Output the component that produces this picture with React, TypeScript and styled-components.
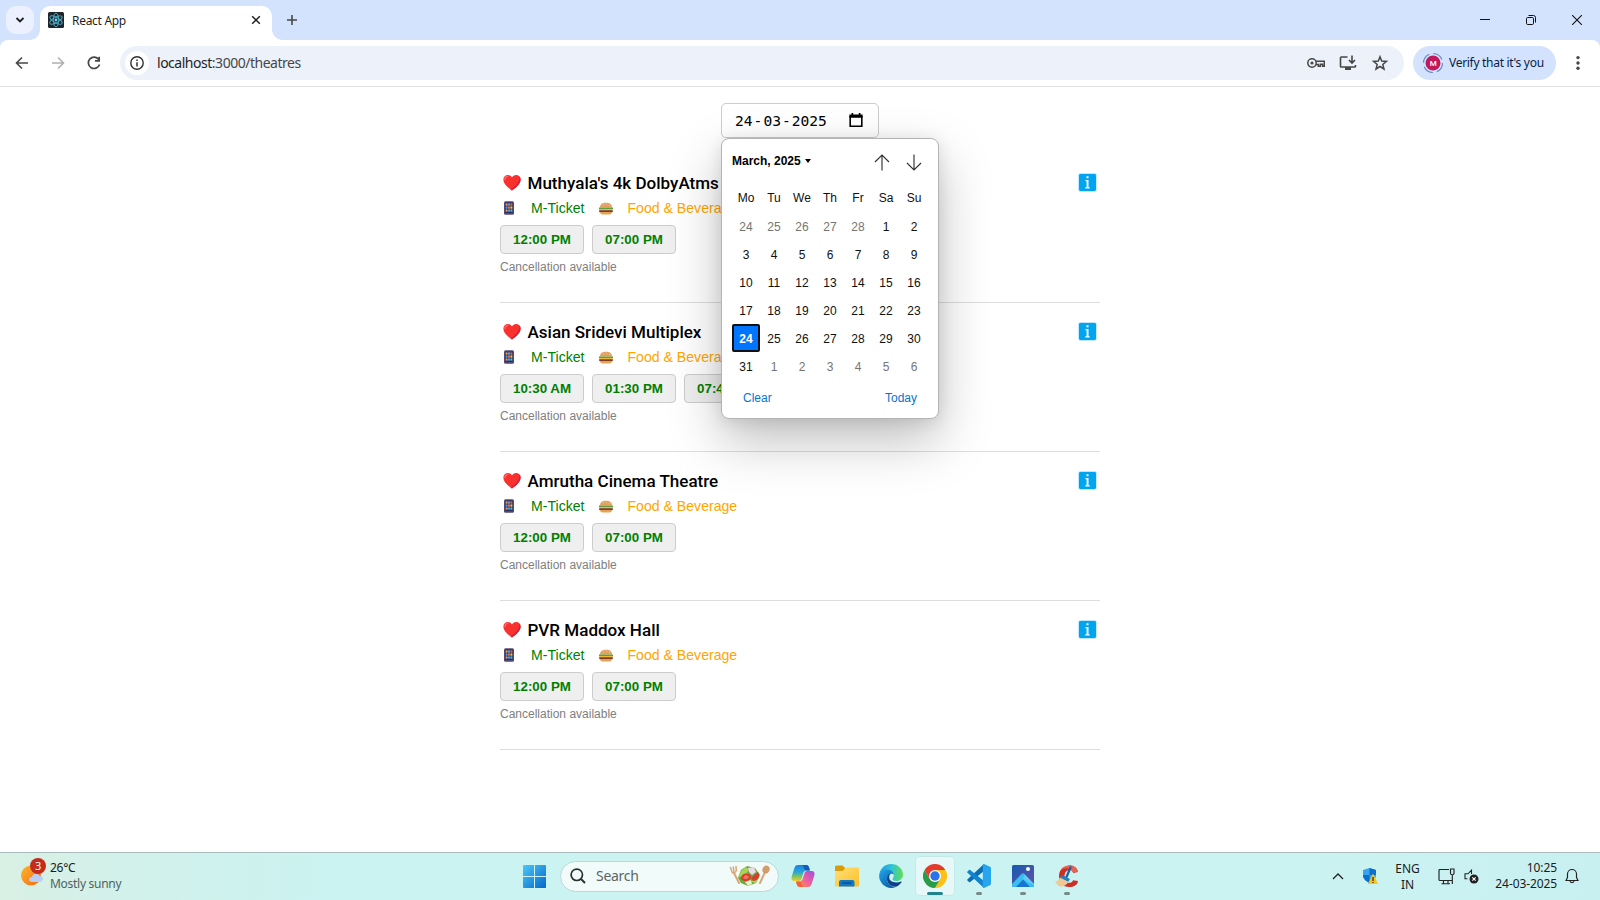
import React from "react";
import styled, { createGlobalStyle } from "styled-components";

const Global = createGlobalStyle`
  * { box-sizing: border-box; }
  body { margin: 0; background: #fff; overflow: hidden; font-family: "Liberation Sans", Arial, sans-serif; }
  svg { display: block; flex: none; }
  button { font: inherit; padding: 0; border: 0; background: none; color: inherit; }
`;

const ui = `"Noto Sans", "Open Sans", sans-serif`;

const Screen = styled.div`
  width: 1600px;
  height: 900px;
  display: flex;
  flex-direction: column;
  overflow: hidden;
`;

/* ---------- browser frame ---------- */
const TitleBar = styled.header`
  height: 40px;
  flex: none;
  background: #d3e3fd;
  display: flex;
  align-items: flex-end;
`;
const TabSearch = styled.button`
  width: 28px;
  height: 28px;
  margin: 0 6px 6px;
  border-radius: 10px;
  background: #ebf1fe;
  display: grid;
  place-items: center;
`;
const Tab = styled.div`
  width: 232px;
  height: 34px;
  padding: 0 11px 6px 8px;
  border-radius: 10px 10px 0 0;
  background: #fff;
  display: flex;
  align-items: center;
  position: relative;
  font: 12px ${ui};
  letter-spacing: -0.3px;
  color: #1f1f1f;
  &::before, &::after {
    content: "";
    position: absolute;
    bottom: 0;
    width: 10px;
    height: 10px;
  }
  &::before { left: -10px; background: radial-gradient(circle at 0 0, transparent 9.5px, #fff 10px); }
  &::after { right: -10px; background: radial-gradient(circle at 100% 0, transparent 9.5px, #fff 10px); }
`;
const TabTitle = styled.span`
  flex: 1;
  margin-left: 8px;
`;
const NewTab = styled.button`
  margin: 0 0 14px 14px;
`;
const WindowButtons = styled.div`
  margin-left: auto;
  height: 40px;
  display: flex;
  button {
    width: 46px;
    display: grid;
    place-items: center;
  }
`;
const ToolbarBack = styled.div`
  background: #d3e3fd;
  flex: none;
`;
const Toolbar = styled.div`
  height: 47px;
  padding: 0 0 1px 13px;
  background: #fff;
  border-radius: 8px 8px 0 0;
  border-bottom: 1px solid #dfe1e3;
  display: flex;
  align-items: center;
`;
const NavButtons = styled.nav`
  width: 107px;
  display: flex;
  gap: 18px;
`;
const AddressBar = styled.div`
  width: 1284px;
  height: 34px;
  padding: 0 15px 0 5px;
  border-radius: 17px;
  background: #ecf1fa;
  display: flex;
  align-items: center;
  font: 14px ${ui};
  color: #474747;
`;
const SiteInfo = styled.span`
  width: 24px;
  height: 24px;
  border-radius: 50%;
  background: #fff;
  display: grid;
  place-items: center;
  margin-right: 8px;
`;
const Url = styled.span`
  flex: 1;
  letter-spacing: -0.48px;
  b { font-weight: 400; color: #1f1f1f; }
`;
const AddressIcons = styled.div`
  display: flex;
  gap: 14px;
`;
const ProfileChip = styled.button`
  width: 143px;
  height: 34px;
  margin: 0 14px 0 9px;
  padding-left: 9px;
  border-radius: 17px;
  background: #d3e3fd;
  display: flex;
  align-items: center;
  gap: 5px;
  font: 12px ${ui};
  letter-spacing: -0.3px;
  color: #041e49;
  white-space: nowrap;
`;

/* ---------- page ---------- */
const Page = styled.main`
  height: 765px;
  flex: none;
  padding-top: 16px;
  display: flex;
  flex-direction: column;
  align-items: center;
`;
const DateField = styled.div`
  position: relative;
  width: 158px;
  height: 35px;
  margin-bottom: 16px;
  padding: 0 15px 0 13px;
  border: 1px solid #ccc;
  border-radius: 5px;
  display: flex;
  align-items: center;
  justify-content: space-between;
`;
const DateText = styled.div`
  display: flex;
  gap: 1px;
  font: 14.6px "DejaVu Sans Mono", monospace;
  color: #000;
`;
const Popup = styled.div`
  position: absolute;
  z-index: 2;
  top: 34px;
  left: -1px;
  width: 218px;
  height: 281px;
  padding: 7px 10px 0;
  border: 1px solid #b4b4b4;
  border-radius: 8px;
  background: #fff;
  box-shadow: 0 22px 52px rgba(0, 0, 0, 0.25), 0 2px 16px rgba(0, 0, 0, 0.1);
  font: 12px "Liberation Sans", Arial, sans-serif;
  color: #101010;
`;
const PopupHead = styled.div`
  height: 30px;
  display: flex;
  align-items: center;
  font-weight: 700;
  color: #000;
`;
const Caret = styled.i`
  margin-left: 4px;
  border: 3.5px solid transparent;
  border-top: 4px solid #000;
  border-bottom: 0;
`;
const Arrows = styled.div`
  margin: 2px 6px 0 auto;
  display: flex;
  gap: 16px;
`;
const Grid = styled.div`
  margin-top: 8px;
  display: grid;
  grid-template-columns: repeat(7, 28px);
  grid-auto-rows: 28px;
`;
const Weekday = styled.span`
  display: grid;
  place-items: center;
`;
const Day = styled.span<{ $muted?: boolean; $on?: boolean }>`
  display: grid;
  place-items: center;
  padding-top: 2px;
  line-height: 14px;
  color: ${(p) => (p.$on ? "#fff" : p.$muted ? "#757575" : "#101010")};
  font-weight: ${(p) => (p.$on ? 700 : 400)};
  background: ${(p) => (p.$on ? "#0075ff" : "none")};
  border: ${(p) => (p.$on ? "2px solid #101010" : "0")};
  border-radius: 2px;
`;
const PopupFoot = styled.div`
  display: flex;
  justify-content: space-between;
  padding: 11px 11px 0;
  color: #0a73cc;
`;

const Theatre = styled.section`
  width: 600px;
  height: 149px;
  padding-top: 18px;
  border-bottom: 1px solid #ddd;
`;
const NameRow = styled.div`
  height: 22px;
  display: flex;
  align-items: center;
  padding: 0 3px 1px 2.5px;
`;
const Name = styled.h3`
  flex: 1;
  margin: 1px 0 0 7px;
  font: 500 17.04px/22px Roboto, sans-serif;
  color: #000;
`;
const Tags = styled.div`
  height: 20px;
  margin-top: 4px;
  padding-left: 3px;
  display: flex;
  align-items: center;
  font-size: 14.1px;
`;
const Tag = styled.span<{ $color: string; $gap: number }>`
  color: ${(p) => p.$color};
  margin: 0 13px 0 ${(p) => p.$gap}px;
`;
const Times = styled.div`
  margin-top: 7px;
  display: flex;
  gap: 8px;
`;
const TimeButton = styled.button`
  width: 84px;
  height: 29px;
  border: 1px solid #ccc;
  border-radius: 4px;
  background: #efefef;
  font-weight: 700;
  font-size: 13.333px;
  color: green;
`;
const Note = styled.p`
  margin: 5px 0 0;
  font-size: 12px;
  line-height: 16px;
  color: gray;
`;

/* ---------- taskbar ---------- */
const Taskbar = styled.footer`
  height: 48px;
  flex: none;
  padding-bottom: 1px;
  border-top: 1px solid #a9bdbf;
  background: linear-gradient(90deg, #d9f0e4 0, #d3f1ea 110px, #cbf3f1 330px, #cbf3f1 1300px, #c9f0f1 1600px);
  display: flex;
  align-items: center;
  font: 12px/16px ${ui};
  color: #1b1b1b;
`;
const Weather = styled.div`
  width: 523px;
  padding-left: 20px;
  display: flex;
  gap: 3px;
  letter-spacing: -0.28px;
  small { display: block; font-size: 12px; color: #4f6260; }
  svg { margin-top: -2px; }
`;
const SearchBox = styled.div`
  width: 219px;
  height: 31px;
  margin: 0 2px 0 13.5px;
  padding: 0 8px 0 9.5px;
  border: 1px solid #b9d9d7;
  border-radius: 16px;
  background: #f0fbfa;
  display: flex;
  align-items: center;
  font-size: 14px;
  letter-spacing: -0.3px;
  color: #5c6564;
  span { flex: 1; margin-left: 10px; }
`;
const AppButton = styled.div<{ $active?: boolean; $running?: boolean }>`
  width: 38px;
  height: 38px;
  margin: 0 3px;
  border-radius: 4px;
  background: ${(p) => (p.$active ? "#e6f9f8" : "none")};
  box-shadow: ${(p) => (p.$active ? "0 0 0 0.5px #c0e0df" : "none")};
  display: grid;
  place-items: center;
  position: relative;
  &::after {
    content: "";
    position: absolute;
    bottom: 0;
    left: 50%;
    transform: translateX(-50%);
    width: ${(p) => (p.$active ? 16 : p.$running ? 6 : 0)}px;
    height: 3px;
    border-radius: 2px;
    background: ${(p) => (p.$active ? "#23838c" : "#76898a")};
  }
`;
const Tray = styled.div`
  margin-left: auto;
  padding-right: 21px;
  display: flex;
  align-items: center;
`;
const Lang = styled.div`
  width: 26px;
  margin: 1px 17px 0 16.5px;
  text-align: center;
`;
const Clock = styled.div`
  width: 64px;
  margin: 0 8px 1px 14.5px;
  text-align: right;
  white-space: nowrap;
  letter-spacing: -0.1px;
`;

/* ---------- icons ---------- */
const Svg = ({ w, h = w, vb, children, ...rest }: any) => (
  <svg width={w} height={h} viewBox={vb || `0 0 ${w} ${h}`} fill="none" {...rest}>{children}</svg>
);

const ReactLogo = () => (
  <Svg w={16}>
    <rect width="16" height="16" rx="1.5" fill="#20232a" />
    <g stroke="#4fb3cc" strokeWidth=".9">
      {[30, 90, 150].map((a) => <ellipse key={a} cx="8" cy="8" rx="6.9" ry="2.7" transform={`rotate(${a} 8 8)`} />)}
    </g>
    <circle cx="8" cy="8" r="1.4" fill="#61dafb" />
  </Svg>
);
const Heart = () => (
  <Svg w={18} h={17}>
    <path d="M9 16.5C5 13.5 .4 10 .4 5.500C.4 2.700 2.500 1 4.800 1C6.700 1 8.300 2 9 3.500C9.700 2 11.300 1 13.200 1C15.500 1 17.600 2.700 17.600 5.500C17.600 10 13 13.500 9 16.500Z" fill="#f8312f" />
    <path d="M9 16.500C13 13.500 17.600 10 17.600 5.500C17.600 4.200 17.100 3 16.300 2.200C16.800 8 13 12 7.500 15.400Z" fill="#d3203c" />
    <path d="M2 5.500C2 3.800 3 2.600 4.600 2.400" stroke="#ff6d70" strokeWidth="1.300" strokeLinecap="round" />
  </Svg>
);
const Phone = () => (
  <Svg w={12} h={14}>
    <rect x="1" y=".3" width="10" height="13.400" rx="1.500" fill="#54487a" />
    <rect x="2.200" y="1.700" width="7.600" height="10" fill="#20244a" />
    {["#f7a13a", "#4aa8f0", "#e8694a", "#4aa8f0", "#f2703f", "#fac04a", "#e7a24a", "#4a9ef0", "#49c0ef"].map((c, i) => (
      <rect key={i} x={2.6 + (i % 3) * 2.4} y={2.4 + Math.floor(i / 3) * 3} width="2" height="2.300" fill={c} />
    ))}
  </Svg>
);
const Burger = () => (
  <Svg w={16} h={14}>
    <path d="M2 6.500C2 3.200 4.600 1.800 8 1.800S14 3.200 14 6.500Z" fill="#e2a062" />
    <path d="M5 3.800h1M8 3.200h1M11 4.200h1" stroke="#f9d8a0" strokeWidth=".8" />
    <path d="M1 6.500h14v1.800H1Z" fill="#5f9e38" />
    <path d="M1.400 8.100h13.200v1.200H1.400Z" fill="#f4b52e" />
    <path d="M1.200 9.200h13.600v1.900H1.200Z" fill="#7c3b2b" />
    <path d="M2 11.100h12c0 1.500-1 2.300-2.500 2.300H4.500C3 13.400 2 12.600 2 11.100Z" fill="#e5a356" />
  </Svg>
);
const InfoSquare = () => (
  <Svg w={19}>
    <rect x=".3" y=".3" width="18.400" height="18.400" rx="2" fill="#a9e0fb" />
    <rect x="1" y="1" width="17" height="17" rx="1.400" fill="#00a4ef" />
    <path d="M8.500 3.200h2v2h-2ZM7.500 7h3v7.300h1.200v1.300H7.300v-1.300h1.300V8.300H7.500Z" fill="#fff" />
  </Svg>
);
const CalendarIcon = () => (
  <Svg w={14} h={15}>
    <path d="M1.200 3v10.200h11.600V3" stroke="#000" strokeWidth="1.600" />
    <path d="M.4 1.600h13.200v3.200H.4ZM2.500 0h1.700v2.200H2.500ZM9.800 0h1.700v2.200H9.800Z" fill="#000" />
  </Svg>
);
const Arrow = ({ down }: { down?: boolean }) => (
  <Svg w={16} h={17} stroke="#333">
    <path d={down ? "M8 .5v15.300M1 9l7 7 7-7" : "M8 16.500V1.200M1 8l7-7 7 7"} strokeWidth="1.150" />
  </Svg>
);

const Salad = () => (
  <Svg w={41} h={22}>
    <g stroke="#dba676" strokeLinecap="round">
      <path d="M5 8 10 18M37 5l-6 13" strokeWidth="2" />
      <path d="M1.500 2.500 3 7c1 1.500 4 1 4.300-1.500L7 1.500M4.300 2l.7 5" strokeWidth="1.500" />
    </g>
    <ellipse cx="37" cy="4.500" rx="3.500" ry="4" fill="#d39c6c" transform="rotate(25 37 4.500)" />
    <path d="M9 13 12 5l6-4 8 2 5 7-4 8-8 3-7-3Z" fill="#6ea93a" />
    <path d="m12 6 5-4 3 3-5 6-5 1ZM22 17l6-6 2 2-3 5Z" fill="#a8d458" />
    <path d="M12 14c0-6 7-7 10-3 0 5-6 7-10 3ZM22 13l7-6c3 4 0 9-5 9Z" fill="#d93d32" />
    <path d="M14 13c1-3 4-4 6-1-1 2-4 3-6 1Z" fill="#f3775b" />
    <path d="m19 3 6-1 2 5-4 3-3-3Z" fill="#ecd9ea" />
    <path d="m16 17 6-2 1 4-4 2Z" fill="#e8efcc" />
  </Svg>
);
const Windows = () => (
  <Svg w={23}>
    <defs><linearGradient id="wn" x1="0" y1="0" x2="23" y2="23" gradientUnits="userSpaceOnUse"><stop stopColor="#4cc7f8" /><stop offset="1" stopColor="#0567c9" /></linearGradient></defs>
    <path d="M0 .8Q0 0 .8 0H11v11H0ZM12 0h10.200q.8 0 .8.800V11H12ZM0 12h11v11H.8q-.8 0-.8-.8ZM12 12h11v10.200q0 .8-.8.800H12Z" fill="url(#wn)" />
  </Svg>
);
const Copilot = () => (
  <Svg w={24} h={22}>
    <defs>
      <linearGradient id="ca" x1="0" y1="0" x2="0" y2="1"><stop stopColor="#1f7fe0" /><stop offset=".45" stopColor="#27a8d8" /><stop offset=".75" stopColor="#8ac850" /><stop offset="1" stopColor="#f5c72e" /></linearGradient>
      <linearGradient id="cb" x1="1" y1="0" x2="0" y2="1"><stop stopColor="#a14be0" /><stop offset=".5" stopColor="#ee5fa0" /><stop offset="1" stopColor="#ff9a3c" /></linearGradient>
    </defs>
    <path d="M7 0h8c2 0 2.600 1 3.200 3l.7 2.500h-3C13.500 5.500 12.500 7 12 9l-1.500 5C10 15.500 9 16 7.500 16H3.500C.8 16 0 14 .7 11.500L3.200 3.500C4 1 5 0 7 0Z" fill="url(#ca)" />
    <path d="M17 22H9c-2 0-2.700-1-3.300-3L5 16.500h3c2.500 0 3.500-1.500 4-3.500l1.500-5C14 6.500 15 6 16.500 6h4c2.700 0 3.500 2 2.800 4.500l-2.500 8C20 21 19 22 17 22Z" fill="url(#cb)" />
    <path d="M7 0h8c2 0 2.600 1 3.200 3l.7 2.500h-3c-1.500 0-2.300-.7-2.700-2C12.700 1.500 12 0 10 0Z" fill="#1657b8" />
    <path d="M5 16.500h3c1.500 0 2.200.7 2.600 2 .5 2 1.200 3.500 3.400 3.500H9c-2 0-2.700-1-3.300-3Z" fill="#f4603a" />
  </Svg>
);
const Folder = () => (
  <Svg w={24} h={22}>
    <path d="M0 2Q0 .5 1.500.5h6L10 3v4H0Z" fill="#d99a0b" />
    <defs><linearGradient id="fd" x1="0" y1="0" x2="1" y2="1"><stop stopColor="#ffe07a" /><stop offset="1" stopColor="#fcbf25" /></linearGradient></defs>
    <path d="M0 6h7.500L11 2.500h12q1 0 1 1V20.500q0 1-1 1H1q-1 0-1-1Z" fill="url(#fd)" />
    <path d="M4 21.500V17q0-2 2-2h11.500q2 0 2 2v4.500Z" fill="#1178c8" />
    <path d="M7.500 18h8.500" stroke="#0a4f91" strokeWidth="1.400" strokeLinecap="round" />
  </Svg>
);
const Edge = () => (
  <Svg w={24}>
    <defs>
      <linearGradient id="ea" x1="0" y1="8" x2="24" y2="8" gradientUnits="userSpaceOnUse"><stop stopColor="#1c98dd" /><stop offset=".5" stopColor="#2fc2d8" /><stop offset="1" stopColor="#62df55" /></linearGradient>
      <linearGradient id="eb" x1="0" y1="8" x2="14" y2="24" gradientUnits="userSpaceOnUse"><stop stopColor="#1ba0e4" /><stop offset="1" stopColor="#0c59a4" /></linearGradient>
    </defs>
    <path d="M.4 10C1.500 4 6.500 0 12 0c7 0 12 5 12 10.500 0 4-3 6.500-6.500 6.500-2.700 0-4-1-4-2 0-.7 1.300-1.300 1.300-3.500 0-3-3-5-6.500-5C4 6.500 1.300 8.500.4 10Z" fill="url(#ea)" />
    <path d="M.2 11C.8 8 4 5.800 8.300 5.800c3.500 0 6 2 6.500 4.500C12 8.500 8 11.500 8 15c0 5 5 8.500 9 7.700C15.500 23.600 13.800 24 12 24 5.500 24-.5 18 .2 11Z" fill="url(#eb)" />
    <path d="M11.500 9.500C8.500 10.500 8 13 8 15c0 4.500 4 8 9 7.700 2.500-1 4.300-2.600 5.500-4.500.4-.7-.2-1-.8-.7-4 2-11.500.8-11.500-4 0-1.800.5-3.200 1.300-4Z" fill="#123f88" />
  </Svg>
);
const Chrome = () => (
  <Svg w={24}>
    <path d="M12 6h10.400A12 12 0 0 1 12 24l5.200-9Z" fill="#fbc116" />
    <path d="M1.600 6 6.800 15 12 18l5.200-3L12 24A12 12 0 0 1 1.600 6Z" fill="#2a9b47" />
    <path d="M1.600 6A12 12 0 0 1 22.400 6H12L6.800 15Z" fill="#e33b2e" />
    <circle cx="12" cy="12" r="6" fill="#fff" /><circle cx="12" cy="12" r="4.700" fill="#2b73e8" />
  </Svg>
);
const Code = () => (
  <Svg w={24}>
    <path d="M17 0v7L3.200 18q-.6.400-1.200 0L.5 16.500q-.6-.7 0-1.300Z" fill="#0a6db4" />
    <path d="M17 24v-7L3.200 6Q2.600 5.600 2 6L.5 7.500q-.6.700 0 1.300Z" fill="#1283cd" />
    <path d="m17 0 6 2.800q1 .5 1 1.400v15.600q0 .9-1 1.400L17 24q-1.200.3-1.200-1V1q0-1.300 1.200-1Z" fill="#27a5ef" />
  </Svg>
);
const Photos = () => (
  <Svg w={22}>
    <defs><linearGradient id="ph" x1="0" y1="0" x2="1" y2="1"><stop stopColor="#125ab2" /><stop offset=".5" stopColor="#3f55aa" /><stop offset="1" stopColor="#6f4ca8" /></linearGradient></defs>
    <rect width="22" height="22" rx="1.500" fill="url(#ph)" />
    <path d="M0 19 9.500 9q1.500-1.400 3 0L22 19v1.500Q22 22 20.500 22h-19Q0 22 0 20.500Z" fill="#38bdf0" />
    <path d="m4 22 7-7.500L18 22Z" fill="#1775d1" /><path d="m12.500 9 9.500 10v1.500L11 14Z" fill="#83d8fa" opacity=".5" />
    <circle cx="16" cy="4" r="2" fill="#fff" />
  </Svg>
);
const CCleaner = () => (
  <Svg w={24} h={23}>
    <path d="M23 7C22 2 18 .3 14 .5 7 1 4 6 4 11.500 4 18 8 22 14 22c5 0 8.500-2 9-6l-5-.8c-.5 2-2 2.600-4 2.600-3 0-4.500-2.500-4.500-6.300 0-3.700 2-6.500 5-6.500 2 0 3.200 1 3.700 3Z" fill="#cf2e24" />
    <path d="M23 7C22 2 18 .3 14 .5c-4 .3-6.700 2-8.200 4.500 4-2.500 9-3 12.400 2.300Z" fill="#ea6152" />
    <path d="M15.500 2.500 11.500 12" stroke="#175f9e" strokeWidth="2.200" strokeLinecap="round" />
    <path d="m7 10 8 4-2 3-8-4Z" fill="#267fc0" />
    <path d="m5 12.500 8.500 4.500c-2 3-5 5-9 4.500C2.500 20 1 18 0 16.500c2 0 4-1.500 5-4Z" fill="#f0c896" />
  </Svg>
);
const WeatherIcon = () => (
  <Svg w={27} h={30}>
    <defs><linearGradient id="sn" x1="0" y1="0" x2="1" y2="1"><stop stopColor="#ffb52b" /><stop offset="1" stopColor="#ee6c16" /></linearGradient></defs>
    <circle cx="11" cy="17.500" r="10" fill="url(#sn)" />
    <path d="M12 24c-4 0-4-5 0-5 .6-4 6-4.500 7.300-1.200 4.700-.4 4.700 6.200.2 6.200Z" fill="#b9cdf5" />
    <circle cx="18" cy="8" r="8" fill="#c42b1c" />
    <text x="18" y="12" fill="#fff" fontFamily="Noto Sans" fontSize="11" textAnchor="middle">3</text>
  </Svg>
);

/* ---------- data ---------- */
const theatres = [
  { name: "Muthyala's 4k DolbyAtms", times: ["12:00 PM", "07:00 PM"] },
  { name: "Asian Sridevi Multiplex", times: ["10:30 AM", "01:30 PM", "07:45 PM"] },
  { name: "Amrutha Cinema Theatre", times: ["12:00 PM", "07:00 PM"] },
  { name: "PVR Maddox Hall", times: ["12:00 PM", "07:00 PM"] },
];
const days = Array.from({ length: 42 }, (_, i) => {
  const n = i - 4;
  return { n: n < 1 ? n + 28 : n > 31 ? n - 31 : n, muted: n < 1 || n > 31 };
});

const DatePopup = () => (
  <Popup>
    <PopupHead>
      March, 2025<Caret />
      <Arrows><Arrow /><Arrow down /></Arrows>
    </PopupHead>
    <Grid>
      {["Mo", "Tu", "We", "Th", "Fr", "Sa", "Su"].map((d) => <Weekday key={d}>{d}</Weekday>)}
      {days.map((d, i) => <Day key={i} $muted={d.muted} $on={d.n === 24 && !d.muted}>{d.n}</Day>)}
    </Grid>
    <PopupFoot><span>Clear</span><span>Today</span></PopupFoot>
  </Popup>
);

const BrowserFrame = () => (
  <>
    <TitleBar>
      <TabSearch><Svg w={10} h={6}><path d="m1.500 1 3.500 3.500L8.500 1" stroke="#1f1f1f" strokeWidth="1.800" /></Svg></TabSearch>
      <Tab>
        <ReactLogo />
        <TabTitle>React App</TabTitle>
        <Svg w={10}><path d="m1.200 1.200 7.600 7.600m0-7.600L1.200 8.800" stroke="#1f1f1f" strokeWidth="1.500" /></Svg>
      </Tab>
      <NewTab><Svg w={12}><path d="M6 1v10M1 6h10" stroke="#474747" strokeWidth="1.600" /></Svg></NewTab>
      <WindowButtons>
        <button><Svg w={10}><path d="M0 4.500h10" stroke="#111" /></Svg></button>
        <button><Svg w={10}><rect x=".5" y="2.500" width="7" height="7" rx="1.200" stroke="#111" /><path d="M2.500.5H7.500Q9.500.5 9.500 2.500v5" stroke="#111" /></Svg></button>
        <button><Svg w={10}><path d="m0 0 10 10m0-10-10 10" stroke="#111" strokeWidth="1.100" /></Svg></button>
      </WindowButtons>
    </TitleBar>
    <ToolbarBack>
      <Toolbar>
        <NavButtons>
          <Svg w={18} stroke="#474747" strokeWidth="1.600"><path d="M15 9H4M9 3.500 3.500 9 9 14.500" /></Svg>
          <Svg w={18} stroke="#b0b0b0" strokeWidth="1.600"><path d="M3 9h11M9 3.500 14.500 9 9 14.500" /></Svg>
          <Svg w={18} stroke="#474747" strokeWidth="1.700"><path d="M13.800 5.600A5.700 5.700 0 1 0 14.500 10.500M14.200 2.800v4H10" /></Svg>
        </NavButtons>
        <AddressBar>
          <SiteInfo><Svg w={14}><circle cx="7" cy="7" r="6.200" stroke="#303030" strokeWidth="1.400" /><path d="M7 6.200v4.200M7 3.500v1.500" stroke="#303030" strokeWidth="1.500" /></Svg></SiteInfo>
          <Url><b>localhost</b>:3000/theatres</Url>
          <AddressIcons>
            <Svg w={18} stroke="#474747" strokeWidth="1.500"><circle cx="5" cy="9" r="4.200" /><circle cx="5" cy="9" r="1.600" fill="#474747" stroke="none" /><path d="M9 7.300h8.300v5h-1.800v-2h-2.200v2h-2v-1.800H9" /></Svg>
            <Svg w={18} stroke="#474747" strokeWidth="1.600"><path d="M8.500 3H2.300q-.8 0-.8.800v8.400q0 .8.800.800h13.400q.8 0 .8-.8V11M13 1.500v7M10 6l3 3 3-3" /><path d="M6 13h6v3H6Z" fill="#474747" stroke="none" /></Svg>
            <Svg w={18} stroke="#474747" strokeWidth="1.500"><path d="m9 2.800 1.700 4.300 4.700.3-3.600 3 1.200 4.600L9 12.500 5 15l1.200-4.600-3.600-3 4.700-.3Z" /></Svg>
          </AddressIcons>
        </AddressBar>
        <ProfileChip>
          <Svg w={22}>
            <circle cx="11" cy="11" r="9.500" stroke="#6689c4" strokeWidth="1.200" strokeDasharray="11 3.900" />
            <circle cx="11" cy="11" r="7.500" fill="#c2185b" />
            <text x="11" y="14" fill="#fff" fontFamily="Roboto" fontSize="8" fontWeight="500" textAnchor="middle">M</text>
          </Svg>
          Verify that it's you
        </ProfileChip>
        <Svg w={16}><g fill="#474747"><circle cx="8" cy="2.600" r="1.700" /><circle cx="8" cy="8" r="1.700" /><circle cx="8" cy="13.300" r="1.700" /></g></Svg>
      </Toolbar>
    </ToolbarBack>
  </>
);

const Bottom = () => (
  <Taskbar>
    <Weather><WeatherIcon /><div>26°C<small>Mostly sunny</small></div></Weather>
    <Windows />
    <SearchBox>
      <Svg w={16}><circle cx="6.800" cy="6.800" r="5.700" stroke="#2a2f2f" strokeWidth="1.700" /><path d="m11 11 4 4" stroke="#2a2f2f" strokeWidth="1.900" /></Svg>
      <span>Search</span>
      <Salad />
    </SearchBox>
    <AppButton><Copilot /></AppButton>
    <AppButton><Folder /></AppButton>
    <AppButton><Edge /></AppButton>
    <AppButton $active><Chrome /></AppButton>
    <AppButton $running><Code /></AppButton>
    <AppButton $running><Photos /></AppButton>
    <AppButton $running><CCleaner /></AppButton>
    <Tray>
      <Svg w={12} h={8}><path d="m1 7 5-5 5 5" stroke="#222" strokeWidth="1.300" /></Svg>
      <Svg w={34} h={18}>
        <g transform="translate(18 0)">
          <path d="M7.500 1 14 3v5c0 4-3 6.300-6.500 8C4 14.300 1 12 1 8V3Z" fill="#36a5ee" />
          <path d="M7.500 1 14 3v5H7.500ZM1 8h6.500v8C4 14.300 1 12 1 8Z" fill="#0b6fce" />
          <path d="M11 6.500 16 17H6Z" fill="#fcc419" /><path d="M11 10v4M11 15v1" stroke="#222" strokeWidth="1.200" />
        </g>
      </Svg>
      <Lang>ENG<br />IN</Lang>
      <Svg w={17} h={17} stroke="#222" strokeWidth="1.150"><path d="M11 1.500H2q-1 0-1 1v9q0 1 1 1h12M5.500 12.500v3M10 12.500v3M3.500 15.700h8.500M12.500 1h3.500v4.500q0 1.200-1.700 1.200T12.500 5.500ZM14.300 7v9" /></Svg>
      <Svg w={24} h={15}><g transform="translate(9 0)"><path d="M7.500 2v-.8L4 4.800H1v5h2.500M7.500 1v4" stroke="#222" strokeWidth="1.100" /><circle cx="10" cy="10" r="4.500" fill="#222" /><path d="m8.300 8.300 3.400 3.400m0-3.400-3.400 3.400" stroke="#fff" strokeWidth="1.100" /></g></Svg>
      <Clock>10:25<br />24-03-2025</Clock>
      <Svg w={14} h={16} stroke="#222" strokeWidth="1.150"><path d="M1 12.500 2.500 9.500V6a4.500 4.500 0 0 1 9 0v3.500L13 12.500ZM5 13c.3 2.200 3.700 2.200 4 0" /></Svg>
    </Tray>
  </Taskbar>
);

export default function App() {
  return (
    <Screen>
      <Global />
      <BrowserFrame />
      <Page>
        <DateField>
          <DateText><span>24</span><span>-</span><span>03</span><span>-</span><span>2025</span></DateText>
          <CalendarIcon />
          <DatePopup />
        </DateField>
        {theatres.map((t) => (
          <Theatre key={t.name}>
            <NameRow><Heart /><Name>{t.name}</Name><InfoSquare /></NameRow>
            <Tags>
              <Phone /><Tag $color="green" $gap={16}>M-Ticket</Tag>
              <Burger /><Tag $color="orange" $gap={14}>Food &amp; Beverage</Tag>
            </Tags>
            <Times>{t.times.map((x) => <TimeButton key={x}>{x}</TimeButton>)}</Times>
            <Note>Cancellation available</Note>
          </Theatre>
        ))}
      </Page>
      <Bottom />
    </Screen>
  );
}
